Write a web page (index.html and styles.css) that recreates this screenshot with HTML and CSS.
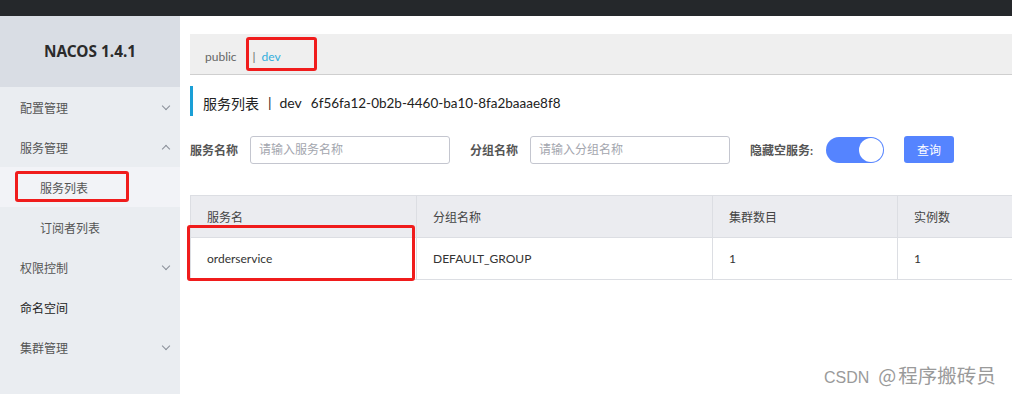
FILE: index.html
```html
<!DOCTYPE html>
<html lang="zh-CN">
<head>
    <meta charset="UTF-8">
    <title>Nacos - 服务列表</title>
    <link rel="stylesheet" href="styles.css">
</head>
<body>
    <div class="topbar"></div>
    <div class="layout">
        <aside class="sidebar">
            <div class="logo">NACOS 1.4.1</div>
            <ul class="menu">
                <li class="menu-item">配置管理<span class="chevron down"></span></li>
                <li class="menu-item">服务管理<span class="chevron up"></span></li>
                <li class="menu-item sub active">服务列表</li>
                <li class="menu-item sub">订阅者列表</li>
                <li class="menu-item">权限控制<span class="chevron down"></span></li>
                <li class="menu-item plain">命名空间</li>
                <li class="menu-item">集群管理<span class="chevron down"></span></li>
            </ul>
        </aside>

        <main class="content">
            <div class="namespace-bar">
                <span class="ns">public</span>
                <span class="ns-sep">|</span>
                <span class="ns current">dev</span>
            </div>

            <h2 class="page-title">
                <span>服务列表</span>
                <span class="title-sep">|</span>
                <span>dev</span>
                <span class="ns-id">6f56fa12-0b2b-4460-ba10-8fa2baaae8f8</span>
            </h2>

            <form class="search-row">
                <label class="field-label">服务名称</label>
                <input class="field-input" type="text" placeholder="请输入服务名称">
                <label class="field-label">分组名称</label>
                <input class="field-input" type="text" placeholder="请输入分组名称">
                <label class="field-label toggle-label">隐藏空服务:</label>
                <span class="switch"><span class="knob"></span></span>
                <button type="button" class="query-btn">查询</button>
            </form>

            <table class="service-table">
                <thead>
                    <tr>
                        <th class="col-name">服务名</th>
                        <th class="col-group">分组名称</th>
                        <th class="col-cluster">集群数目</th>
                        <th class="col-inst">实例数</th>
                    </tr>
                </thead>
                <tbody>
                    <tr>
                        <td>orderservice</td>
                        <td>DEFAULT_GROUP</td>
                        <td>1</td>
                        <td>1</td>
                    </tr>
                </tbody>
            </table>
        </main>
    </div>

    <!-- screenshot annotations -->
    <div class="mark mark-ns"></div>
    <div class="mark mark-menu"></div>
    <div class="mark mark-row"></div>
    <div class="watermark"><span class="wm-latin">CSDN</span>@<span class="wm-name">程序搬砖员</span></div>
</body>
</html>
```

FILE: styles.css
```css
* {
    margin: 0;
    padding: 0;
    box-sizing: border-box;
}

body {
    width: 1012px;
    height: 394px;
    overflow: hidden;
    position: relative;
    background-color: #fff;
    font-family: Lato, "Noto Sans CJK SC", sans-serif;
    font-size: 12px;
    color: #333;
}

.topbar {
    height: 16px;
    background-color: #25282b;
}

.layout {
    display: flex;
    height: 378px;
}

/* sidebar */
.sidebar {
    width: 180px;
    flex-shrink: 0;
    background-color: #eaedf1;
}

.logo {
    height: 71px;
    background-color: #d9dde4;
    display: flex;
    align-items: center;
    justify-content: center;
    font-family: "Noto Sans", sans-serif;
    font-weight: bold;
    font-size: 15.4px;
    color: #2b2b2b;
}

.menu {
    list-style: none;
}

.menu-item {
    position: relative;
    height: 40px;
    line-height: 40px;
    padding: 2px 0 0 20px;
    color: #555;
}

.menu-item.sub {
    padding-left: 40px;
}

.menu-item.active {
    background-color: #f2f3f7;
}

.menu-item.plain {
    color: #222;
}

.chevron {
    position: absolute;
    right: 11px;
    top: 16px;
    width: 6px;
    height: 6px;
    border-right: 1px solid #8a8f99;
    border-bottom: 1px solid #8a8f99;
}

.chevron.down {
    transform: rotate(45deg);
}

.chevron.up {
    top: 19px;
    transform: rotate(-135deg);
}

/* main area */
.content {
    flex: 1;
    overflow: hidden;
    padding: 18px 0 0 10px;
}

.namespace-bar {
    height: 41px;
    background-color: #efefef;
    border-bottom: 1px solid #cfcfcf;
    display: flex;
    align-items: center;
    padding-left: 15px;
    padding-top: 4px;
    width: 900px;
}

.ns {
    color: #666;
}

.ns-sep {
    color: #666;
    margin: 0 6px 0 16px;
}

.ns.current {
    color: #33aedc;
}

.page-title {
    display: flex;
    align-items: center;
    margin-top: 11px;
    height: 30px;
    padding-top: 3px;
    border-left: 3px solid #1a9fd6;
    padding-left: 10px;
    font-size: 14px;
    font-weight: normal;
    color: #222;
    white-space: nowrap;
}

.title-sep {
    margin: 0 8px 0 9px;
}

.ns-id {
    margin-left: 9px;
    font-size: 13.5px;
}

.search-row {
    display: flex;
    align-items: center;
    margin-top: 20px;
    height: 27px;
}

.field-label {
    font-weight: bold;
    color: #555;
    margin-right: 12px;
}

.field-input {
    width: 200px;
    height: 28px;
    border: 1px solid #c4c6cf;
    border-radius: 3px;
    padding: 0 8px;
    font-family: inherit;
    font-size: 12px;
    margin-right: 20px;
}

.field-input::placeholder {
    color: #a3a6ae;
}

.toggle-label {
    margin-right: 13px;
}

.switch {
    position: relative;
    width: 58px;
    height: 26px;
    border-radius: 13px;
    background-color: #5584ff;
    margin-right: 20px;
}

.knob {
    position: absolute;
    right: 1px;
    top: 1px;
    width: 24px;
    height: 24px;
    border-radius: 50%;
    background-color: #fff;
}

.query-btn {
    width: 50px;
    height: 27px;
    border: none;
    border-radius: 3px;
    background-color: #5584ff;
    color: #fff;
    font-family: inherit;
    font-size: 12px;
}

/* table */
.service-table {
    margin-top: 32px;
    border-collapse: collapse;
    table-layout: fixed;
    width: 900px;
}

.service-table th,
.service-table td {
    height: 42px;
    padding: 0 16px;
    text-align: left;
    border: 1px solid #dcdee3;
    font-weight: normal;
    color: #333;
    white-space: nowrap;
}

.service-table th {
    background-color: #ebecf0;
    color: #444;
}

.col-name { width: 226px; }
.col-group { width: 296px; }
.col-cluster { width: 185px; }
.col-inst { width: 193px; }

/* annotations */
.mark {
    position: absolute;
    border: 3px solid #f01c1c;
    border-radius: 3px;
}

.mark-ns {
    left: 246px;
    top: 37px;
    width: 71px;
    height: 34px;
}

.mark-menu {
    left: 15px;
    top: 171px;
    width: 114px;
    height: 31px;
}

.mark-row {
    left: 187px;
    top: 225px;
    width: 228px;
    height: 56px;
}

.watermark {
    position: absolute;
    left: 824px;
    top: 362px;
    font-size: 19px;
    line-height: 26px;
    color: #9a9a9a;
    font-family: "Noto Sans CJK SC", sans-serif;
    text-shadow: 0 0 1px #fff;
}

.wm-latin {
    font-family: "Liberation Sans", sans-serif;
    font-size: 16px;
    margin-right: 9px;
}

.wm-name {
    font-size: 19.5px;
    margin-left: 2px;
}
```
